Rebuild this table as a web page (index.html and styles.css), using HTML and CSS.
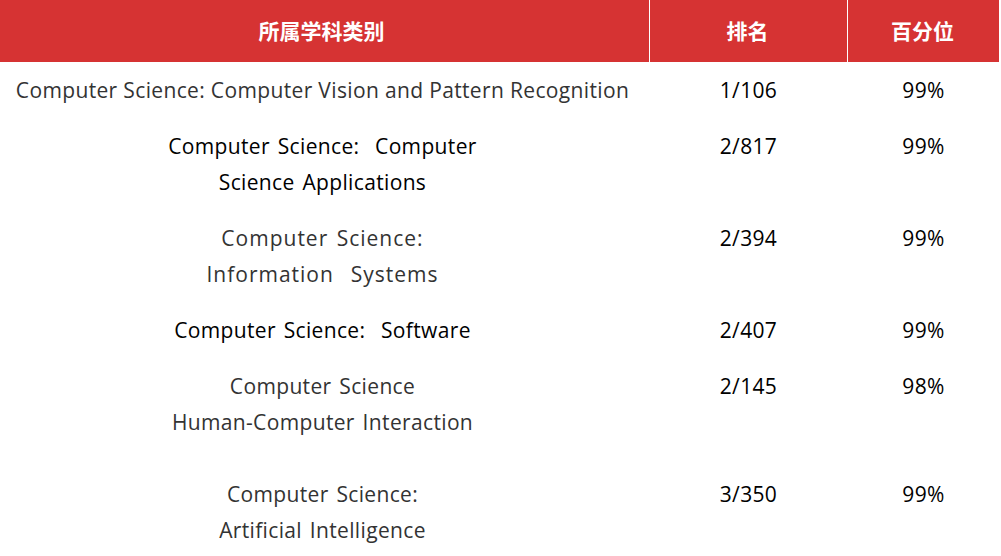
FILE: index.html
```html
<!DOCTYPE html>
<html lang="zh-CN">
<head>
<meta charset="utf-8">
<link rel="stylesheet" href="styles.css">
</head>
<body>
<div class="table">
  <div class="row head">
    <div class="cell c1">所属学科类别</div>
    <div class="cell c2">排名</div>
    <div class="cell c3">百分位</div>
  </div>
  <div class="row">
    <div class="cell c1 grey first">Computer Science: Computer Vision and Pattern Recognition</div>
    <div class="cell c2">1/106</div>
    <div class="cell c3">99%</div>
  </div>
  <div class="row">
    <div class="cell c1 wide">Computer Science:&nbsp; Computer<br>Science Applications</div>
    <div class="cell c2">2/817</div>
    <div class="cell c3">99%</div>
  </div>
  <div class="row">
    <div class="cell c1 grey spaced">Computer Science:<br>Information&nbsp; Systems</div>
    <div class="cell c2">2/394</div>
    <div class="cell c3">99%</div>
  </div>
  <div class="row">
    <div class="cell c1 wide">Computer Science:&nbsp; Software</div>
    <div class="cell c2">2/407</div>
    <div class="cell c3">99%</div>
  </div>
  <div class="row tall">
    <div class="cell c1 grey wide">Computer Science<br>Human-Computer Interaction</div>
    <div class="cell c2">2/145</div>
    <div class="cell c3">98%</div>
  </div>
  <div class="row">
    <div class="cell c1 grey wide">Computer Science:<br>Artificial Intelligence</div>
    <div class="cell c2">3/350</div>
    <div class="cell c3">99%</div>
  </div>
</div>
</body>
</html>
```
FILE: styles.css
```css
html, body {
  margin: 0;
  padding: 0;
  background: #ffffff;
}
.table {
  width: 999px;
  font-family: "Open Sans", "Noto Sans CJK SC", sans-serif;
  font-size: 21px;
  letter-spacing: 0.35px;
  color: #000000;
}
.row {
  display: grid;
  grid-template-columns: 649px 198px 152px;
}
.cell {
  text-align: center;
  line-height: 36px;
  padding: 10px 0;
}
.c1 {
  padding-right: 4px;
}
.c2, .c3 {
  border-left: 1px solid transparent;
}
.head {
  background: #d63333;
  color: #ffffff;
  font-family: "Noto Sans CJK SC", sans-serif;
  font-weight: bold;
  font-size: 21px;
  letter-spacing: 0;
}
.head .cell {
  line-height: 60px;
  padding: 0 6px 2px 0;
}
.head .c2, .head .c3 {
  border-left-color: #ffffff;
}
.head .c2, .head .c3 {
  padding-right: 2px;
}
.grey {
  color: #333333;
}
.wide {
  word-spacing: 2px;
}
.spaced {
  letter-spacing: 1px;
  word-spacing: 2px;
}
.tall .cell {
  padding-bottom: 26px;
}
```
